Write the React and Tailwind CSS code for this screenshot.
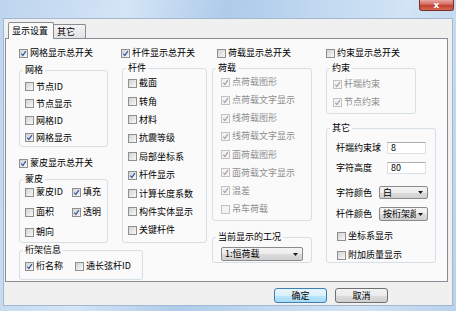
import React from "react"

function Box({ checked, disabled }) {
  return (
    <span
      className={
        disabled
          ? "relative w-[9px] h-[9px] shrink-0 border border-[#c2c2c2] bg-[#f3f3f3]"
          : "relative w-[9px] h-[9px] shrink-0 border border-[#8e8f8f] bg-[linear-gradient(135deg,#d2d2d2,#f9f9f9)]"
      }
    >
      {checked && (
        <svg viewBox="0 0 7 7" className="absolute left-0 top-0 w-[7px] h-[7px]">
          <path
            d="M1.2 3.6 L2.9 5.4 L5.9 1.2"
            fill="none"
            stroke={disabled ? "#a8a8a8" : "#3d5ea6"}
            strokeWidth="1.3"
          />
        </svg>
      )}
    </span>
  )
}

function Check({ label, checked, disabled, className = "" }) {
  return (
    <div className={`flex items-center gap-[2px] leading-[12px] ${className}`}>
      <Box checked={checked} disabled={disabled} />
      <span className={disabled ? "text-[#8f8f8f] whitespace-nowrap" : "whitespace-nowrap"}>{label}</span>
    </div>
  )
}

function Group({ title, className = "", children }) {
  return (
    <fieldset className={`border border-[#d5dfe5] rounded-[3px] shrink-0 ${className}`}>
      <legend className="ml-[3px] px-[2px] leading-[12px]">{title}</legend>
      {children}
    </fieldset>
  )
}

function Combo({ value, className = "" }) {
  return (
    <div
      className={`flex items-center justify-between border border-[#8a8a8a] rounded-[2px] bg-[linear-gradient(#f4f4f4,#ebebeb_50%,#dcdcdc_51%,#d0d0d0)] pl-[3px] pr-[4px] overflow-hidden ${className}`}
    >
      <span className="whitespace-nowrap overflow-hidden leading-[12px]">{value}</span>
      <svg viewBox="0 0 5 3" className="w-[5px] h-[3px] shrink-0 ml-[2px]">
        <path d="M0 0 H5 L2.5 3 Z" fill="#1a1a1a" />
      </svg>
    </div>
  )
}

function Field({ value }) {
  return (
    <div className="w-[39px] h-[12px] bg-white border border-[#dcdfe6] border-t-[#abadb3] pl-[3px] leading-[10px]">
      {value}
    </div>
  )
}

export default function App() {
  return (
    <div className="w-[456px] h-[311px] flex flex-col overflow-hidden text-[9px] text-black font-['Noto_Sans_CJK_SC',sans-serif] bg-[linear-gradient(100deg,#bdd5ee_0%,#d4e5f6_25%,#aecbea_45%,#c3daf1_65%,#d2e4f5_80%,#b8d1ec_100%)]">
      {/* title bar */}
      <div className="h-[18px] shrink-0 flex justify-end items-start pr-[2px]">
        <div className="w-[35px] h-[11px] rounded-b-[3px] border border-t-0 border-[#7b302b] bg-[linear-gradient(#e9a89f,#d3685c_45%,#c2402f_55%,#d36a52)] flex items-center justify-center text-white font-bold text-[9px] leading-none font-['DejaVu_Sans',sans-serif]">
          x
        </div>
      </div>

      {/* client area */}
      <div className="flex-1 mx-[3px] mb-[5px] border border-[#a3b7ce] bg-[#f0f0f0] flex flex-col">
        {/* tabs */}
        <div className="h-[19px] shrink-0 flex items-end pl-[4px]">
          <div className="relative z-10 -mb-px h-[17px] w-[46px] border border-b-0 border-[#898c95] rounded-t-[2px] bg-[#fafafa] pl-[3px] leading-[15px]">
            显示设置
          </div>
          <div className="h-[14px] w-[33px] -ml-px border border-b-0 border-[#898c95] rounded-t-[2px] bg-[linear-gradient(#f2f2f2,#e3e3e3)] pl-[3px] leading-[13px]">
            其它
          </div>
        </div>

        {/* tab panel */}
        <div className="ml-px w-[443px] h-[244px] shrink-0 border border-[#898c95] bg-[#fafafa] flex items-start pl-[13px] pt-[8px]">
          {/* column 1 */}
          <div className="w-[102px] shrink-0 flex flex-col items-start">
            <Check label="网格显示总开关" checked className="h-[12px]" />
            <Group title="网格" className="mt-[5px] w-[89px]">
              <div className="pl-[5px] pt-[2px] flex flex-col">
                <Check label="节点ID" className="h-[17px]" />
                <Check label="节点显示" className="h-[17px]" />
                <Check label="网格ID" className="h-[17px]" />
                <Check label="网格显示" checked className="h-[17px]" />
              </div>
            </Group>
            <Check label="蒙皮显示总开关" checked className="h-[12px] mt-[10px]" />
            <Group title="蒙皮" className="mt-[4px] w-[89px]">
              <div className="pl-[5px] -mt-[3px] flex flex-col">
                <div className="h-[20px] flex items-center">
                  <Check label="蒙皮ID" className="w-[47px]" />
                  <Check label="填充" checked />
                </div>
                <div className="h-[20px] flex items-center">
                  <Check label="面积" className="w-[47px]" />
                  <Check label="透明" checked />
                </div>
                <div className="h-[20px] flex items-center">
                  <Check label="朝向" />
                </div>
              </div>
            </Group>
            <Group title="桁架信息" className="mt-[1px] w-[124px]">
              <div className="pl-[5px] pb-[3px] h-[23px] flex items-start">
                <div className="h-[20px] flex items-center">
                  <Check label="桁名称" checked className="w-[50px]" />
                  <Check label="通长弦杆ID" />
                </div>
              </div>
            </Group>
          </div>

          {/* column 2 */}
          <div className="w-[91px] shrink-0 flex flex-col items-start">
            <Check label="杆件显示总开关" checked className="h-[12px]" />
            <Group title="杆件" className="mt-[3px] ml-px w-[85px]">
              <div className="pl-[5px] pb-[2px] flex flex-col">
                {[
                  ["截面", false],
                  ["转角", false],
                  ["材料", false],
                  ["抗震等级", false],
                  ["局部坐标系", false],
                  ["杆件显示", true],
                  ["计算长度系数", false],
                  ["构件实体显示", false],
                  ["关键杆件", false],
                ].map(([t, c]) => (
                  <Check key={t} label={t} checked={c} className="h-[18.4px]" />
                ))}
              </div>
            </Group>
          </div>

          {/* column 3 */}
          <div className="w-[114px] shrink-0 flex flex-col items-start">
            <Check label="荷载显示总开关" className="h-[12px] ml-[5px]" />
            <Group title="荷载" className="mt-[3px] w-[100px]">
              <div className="pl-[8px] -mt-px pb-[2px] flex flex-col">
                {[
                  ["点荷载图形", true],
                  ["点荷载文字显示", true],
                  ["线荷载图形", true],
                  ["线荷载文字显示", true],
                  ["面荷载图形", true],
                  ["面荷载文字显示", true],
                  ["温差", true],
                  ["吊车荷载", false],
                ].map(([t, c]) => (
                  <Check key={t} label={t} checked={c} disabled className="h-[18.15px]" />
                ))}
              </div>
            </Group>
            <Group title="当前显示的工况" className="mt-[10px] w-[100px]">
              <div className="pl-[8px] pt-[4px] pb-px">
                <Combo value="1:恒荷载" className="w-[82px] h-[14px]" />
              </div>
            </Group>
          </div>

          {/* column 4 */}
          <div className="w-[112px] shrink-0 flex flex-col items-start">
            <Check label="约束显示总开关" className="h-[12px]" />
            <Group title="约束" className="mt-[3px] w-[90px]">
              <div className="pl-[6px] pt-px pb-[2px] flex flex-col">
                <Check label="杆端约束" checked disabled className="h-[18px]" />
                <Check label="节点约束" checked disabled className="h-[18px]" />
              </div>
            </Group>
            <Group title="其它" className="mt-[8px] w-[110px]">
              <div className="pl-[9px] pb-px flex flex-col">
                <div className="mt-[8px] h-[12px] flex items-center leading-[12px]">
                  <span className="w-[51px]">杆端约束球</span>
                  <Field value="8" />
                </div>
                <div className="mt-[8px] h-[12px] flex items-center leading-[12px]">
                  <span className="w-[51px]">字符高度</span>
                  <Field value="80" />
                </div>
                <div className="mt-[12px] h-[13px] flex items-center">
                  <span className="w-[43px] leading-[12px]">字符颜色</span>
                  <Combo value="白" className="w-[49px] h-[13px]" />
                </div>
                <div className="mt-[8px] h-[14px] flex items-center">
                  <span className="w-[43px] leading-[12px]">杆件颜色</span>
                  <Combo value="按桁架颜色" className="w-[49px] h-[14px]" />
                </div>
                <Check label="坐标系显示" className="mt-[9px] h-[12px] ml-px" />
                <Check label="附加质量显示" className="mt-[7px] h-[12px] ml-px" />
              </div>
            </Group>
          </div>
        </div>

        {/* buttons */}
        <div className="flex justify-end gap-[8px] pr-[64px] pt-[6px]">
          <button className="w-[53px] h-[15px] rounded-[3px] border border-[#3c7fb1] bg-[linear-gradient(#eaf6fd,#d9f0fc_50%,#bee6fd_51%,#a7d9f5)] leading-[13px] text-[9px]">
            确定
          </button>
          <button className="w-[53px] h-[15px] rounded-[3px] border border-[#707070] bg-[linear-gradient(#f2f2f2,#ebebeb_50%,#dddddd_51%,#cfcfcf)] leading-[13px] text-[9px]">
            取消
          </button>
        </div>
      </div>
    </div>
  )
}
